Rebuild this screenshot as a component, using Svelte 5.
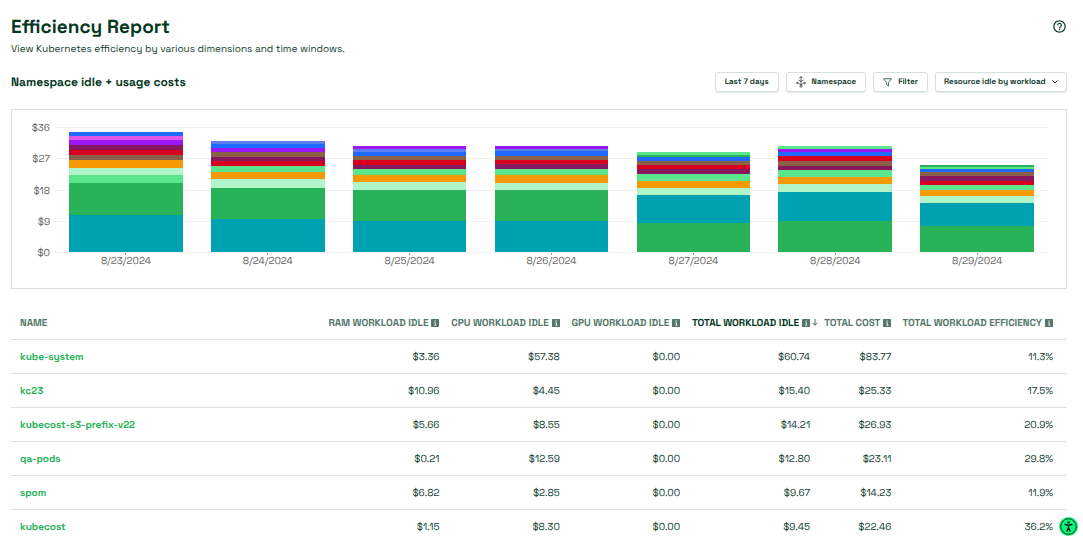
<script lang="ts">
  type Segment = [color: string, cost: number];
  type Day = { date: string; segments: Segment[] };
  type Row = { name: string; values: string[] };

  const MAX_COST = 36;
  const TICKS = [36, 27, 18, 9, 0];

  const TEAL = "#00a2b1";
  const GREEN = "#28b358";
  const MINT = "#5be58c";
  const PALE = "#b2f4c9";
  const ORANGE = "#f49900";
  const BROWN = "#8b6049";
  const RED = "#d9001f";
  const MAROON = "#87175f";
  const PURPLE = "#9a18f5";
  const PINK = "#e255e6";
  const BLUE = "#206bff";
  const PERIWINKLE = "#5d7ff0";

  // segments are listed from the bottom of the stack up
  const DAYS: Day[] = [
    {
      date: "8/23/2024",
      segments: [
        [TEAL, 10.7], [GREEN, 9.1], [MINT, 2.3], [PALE, 2.1], [ORANGE, 2.2], [BROWN, 1.6],
        [RED, 1.4], [MAROON, 1.4], [PURPLE, 1.4], [PINK, 1.3], [BLUE, 1.2],
      ],
    },
    {
      date: "8/24/2024",
      segments: [
        [TEAL, 9.6], [GREEN, 8.9], [PALE, 2.4], [ORANGE, 2.1], [MINT, 1.7], [RED, 1.4],
        [MAROON, 1.3], [BROWN, 1.5], [PURPLE, 1.1], [BLUE, 1.1], [PERIWINKLE, 1],
      ],
    },
    {
      date: "8/25/2024",
      segments: [
        [TEAL, 9], [GREEN, 8.9], [PALE, 2.2], [ORANGE, 2], [MINT, 1.7], [MAROON, 1.4],
        [RED, 1.3], [BROWN, 1.2], [BLUE, 1.1], [PERIWINKLE, 0.9], [PURPLE, 0.9],
      ],
    },
    {
      date: "8/26/2024",
      segments: [
        [TEAL, 9], [GREEN, 8.9], [PALE, 2.1], [ORANGE, 2.1], [MINT, 1.8], [MAROON, 1.4],
        [RED, 1.3], [BROWN, 1.2], [BLUE, 1.2], [PERIWINKLE, 0.8], [PURPLE, 0.8],
      ],
    },
    {
      date: "8/27/2024",
      segments: [
        [GREEN, 8.5], [TEAL, 7.8], [PALE, 2.2], [ORANGE, 2], [MINT, 1.9], [MAROON, 1.4],
        [RED, 1.2], [BROWN, 1.2], [BLUE, 1.1], [GREEN, 0.7], [MINT, 0.7],
      ],
    },
    {
      date: "8/28/2024",
      segments: [
        [GREEN, 8.9], [TEAL, 8.4], [PALE, 2.3], [ORANGE, 2], [MINT, 2], [MAROON, 1.3],
        [BROWN, 1.4], [RED, 1.4], [BLUE, 1.1], [PURPLE, 0.9], [MINT, 0.9],
      ],
    },
    {
      date: "8/29/2024",
      segments: [
        [GREEN, 7.6], [TEAL, 6.6], [PALE, 2], [ORANGE, 1.7], [MINT, 1.5], [RED, 1.1],
        [MAROON, 1.3], [BROWN, 1.3], [BLUE, 0.8], [MINT, 0.6], [GREEN, 0.6],
      ],
    },
  ];

  const COLUMNS = [
    "RAM Workload Idle",
    "CPU Workload Idle",
    "GPU Workload Idle",
    "Total Workload Idle",
    "Total Cost",
    "Total Workload Efficiency",
  ];

  const ROWS: Row[] = [
    { name: "kube-system", values: ["$3.36", "$57.38", "$0.00", "$60.74", "$83.77", "11.3%"] },
    { name: "kc23", values: ["$10.96", "$4.45", "$0.00", "$15.40", "$25.33", "17.5%"] },
    { name: "kubecost-s3-prefix-v22", values: ["$5.66", "$8.55", "$0.00", "$14.21", "$26.93", "20.9%"] },
    { name: "qa-pods", values: ["$0.21", "$12.59", "$0.00", "$12.80", "$23.11", "29.8%"] },
    { name: "spom", values: ["$6.82", "$2.85", "$0.00", "$9.67", "$14.23", "11.9%"] },
    { name: "kubecost", values: ["$1.15", "$8.30", "$0.00", "$9.45", "$22.46", "36.2%"] },
  ];

  let sortColumn = $state("Total Workload Idle");
  let idleMode = $state("workload");
</script>

<main class="page">
  <header class="page-header">
    <div>
      <h1>Efficiency Report</h1>
      <p class="subtitle">View Kubernetes efficiency by various dimensions and time windows.</p>
    </div>
    <button class="help" aria-label="Help">
      <svg viewBox="0 0 24 24" width="15" height="15" fill="#12402f">
        <path d="M11 18h2v-2h-2v2zm1-16C6.48 2 2 6.48 2 12s4.48 10 10 10 10-4.48 10-10S17.52 2 12 2zm0 18c-4.41 0-8-3.59-8-8s3.59-8 8-8 8 3.59 8 8-3.59 8-8 8zm0-14c-2.21 0-4 1.79-4 4h2c0-1.1.9-2 2-2s2 .9 2 2c0 2-3 1.75-3 5h2c0-2.25 3-2.5 3-5 0-2.21-1.79-4-4-4z" />
      </svg>
    </button>
  </header>

  <div class="toolbar">
    <h2>Namespace idle + usage costs</h2>
    <div class="controls">
      <button class="control">Last 7 days</button>
      <button class="control">
        <svg viewBox="0 0 20 24" width="10" height="12" fill="none" stroke="#333" stroke-width="1.5">
          <path d="M10 1v17M6.500 4.500 10 1l3.500 3.500M10 18 3.500 13M10 18l6.500-5M10 11 5 8M10 11l5-3" />
          <circle cx="10" cy="20.500" r="2" />
          <circle cx="2.500" cy="14" r="1.500" />
          <circle cx="17.500" cy="14" r="1.500" />
        </svg>
        Namespace
      </button>
      <button class="control">
        <svg viewBox="0 0 18 18" width="9" height="9" fill="none" stroke="#12402f" stroke-width="1.5" stroke-linejoin="round">
          <path d="M1 1.500h16l-6 7.500v7l-4-2.500V9z" />
        </svg>
        Filter
      </button>
      <div class="control select-wrap">
        <select aria-label="Idle breakdown" bind:value={idleMode}>
          <option value="workload">Resource idle by workload</option>
        </select>
        <svg viewBox="0 0 12 8" width="6" height="4" fill="none" stroke="#12402f" stroke-width="2">
          <path d="M1 1l5 5 5-5" />
        </svg>
      </div>
    </div>
  </div>

  <section class="card" aria-label="Namespace costs by day">
    <div class="axis">
      {#each TICKS as tick}
        <span>${tick}</span>
      {/each}
    </div>
    <div class="plot">
      <div class="grid">
        {#each TICKS as tick (tick)}
          <div class="grid-line"></div>
        {/each}
      </div>
      <div class="days">
        {#each DAYS as day}
          <div class="day">
            <div class="bar">
              {#each day.segments as [color, cost]}
                <div style="height: {(cost / MAX_COST) * 100}%; background: {color}"></div>
              {/each}
            </div>
          </div>
        {/each}
      </div>
      <div class="dates">
        {#each DAYS as day}
          <span>{day.date}</span>
        {/each}
      </div>
    </div>
  </section>

  <table>
    <colgroup>
      <col class="col-name" />
      <col class="col-ram" />
      <col class="col-cpu" />
      <col class="col-gpu" />
      <col class="col-idle" />
      <col class="col-cost" />
      <col class="col-efficiency" />
    </colgroup>
    <thead>
      <tr>
        <th scope="col">Name</th>
        {#each COLUMNS as column}
          <th scope="col" class:sorted={sortColumn === column}>
            <button class="sort" onclick={() => (sortColumn = column)}>
              {column}
              <svg viewBox="0 0 16 16" width="8" height="8">
                <rect width="16" height="16" rx="1" fill="#56766a" />
                <path d="M7 3h2.500v2H7zM6 7h3.500v5H11v1H6v-1h1.500V8H6z" fill="#fff" />
              </svg>
              {#if sortColumn === column}
                <svg class="arrow" viewBox="0 0 12 14" width="6" height="7" fill="none" stroke="#12402f" stroke-width="1.5">
                  <path d="M6 0v12M1 7.500l5 5 5-5" />
                </svg>
              {/if}
            </button>
          </th>
        {/each}
      </tr>
    </thead>
    <tbody>
      {#each ROWS as row}
        <tr>
          <td><a href="#{row.name}">{row.name}</a></td>
          {#each row.values as value}
            <td>{value}</td>
          {/each}
        </tr>
      {/each}
    </tbody>
  </table>
</main>

<button class="accessibility" aria-label="Accessibility options">
  <svg viewBox="0 0 38 38" width="19" height="19">
    <circle cx="19" cy="19" r="19" fill="#0cf57c" />
    <circle cx="19" cy="19" r="15.500" fill="none" stroke="#06371f" stroke-width="2" />
    <circle cx="19" cy="11" r="2.500" fill="#06271a" />
    <path d="M12 15l7 1.500 7-1.500M19 17v4M19 21l-3 7M19 21l3 7" fill="none" stroke="#06271a" stroke-width="3" stroke-linejoin="round" stroke-linecap="round" />
  </svg>
</button>

<style>
  :global(body) {
    margin: 0;
    background: #fff;
  }

  .page {
    padding: 16px 16px 0 11px;
    color: #12402f;
    font-family: "Space Grotesk", Inter, sans-serif;
    font-size: 10px;
    text-rendering: geometricPrecision;
  }

  button,
  select {
    padding: 0;
    border: 0;
    background: none;
    color: inherit;
    font: inherit;
    text-rendering: inherit;
    cursor: pointer;
  }

  svg {
    display: block;
    flex: none;
  }

  .page-header,
  .toolbar {
    display: flex;
    align-items: center;
    justify-content: space-between;
  }

  .page-header {
    align-items: flex-start;
  }

  h1,
  h2,
  p {
    margin: 0;
  }

  h1 {
    color: #06371f;
    font-size: 19px;
    line-height: 22px;
    font-weight: 700;
  }

  .subtitle {
    margin-top: 4px;
    line-height: 14px;
  }

  .help {
    margin-top: 3px;
  }

  .toolbar {
    margin-top: 16px;
  }

  h2 {
    color: #06371f;
    font-size: 12px;
    line-height: 16px;
    font-weight: 700;
  }

  .controls {
    display: flex;
    gap: 7px;
  }

  .control {
    display: flex;
    align-items: center;
    gap: 6px;
    box-sizing: border-box;
    height: 20px;
    padding: 0 9px;
    border: 1px solid #d5dfdc;
    border-radius: 3px;
    box-shadow: 0 1px 1px #e3eae8;
    font-size: 8px;
    font-weight: 700;
    white-space: nowrap;
  }

  .select-wrap {
    padding: 0 8px;
  }

  .select-wrap select {
    appearance: none;
    outline: none;
  }

  .card {
    display: flex;
    gap: 5px;
    margin-top: 17px;
    padding: 17px 18px 19px 9px;
    border: 1px solid #d5dfdc;
    color: #666;
  }

  .axis {
    display: flex;
    flex-direction: column;
    justify-content: space-between;
    width: 29px;
    height: 137px;
    margin-top: -5px;
    line-height: 12px;
    text-align: right;
  }

  .plot {
    position: relative;
    flex: 1;
  }

  .grid {
    position: absolute;
    inset: 0 0 auto;
    display: flex;
    flex-direction: column;
    justify-content: space-between;
    height: 126px;
  }

  .grid-line {
    height: 1px;
    background: #f1f1f1;
  }

  .days {
    position: relative;
    display: flex;
    height: 125px;
  }

  .day {
    display: flex;
    flex: 1;
    justify-content: center;
  }

  .bar {
    display: flex;
    flex-direction: column-reverse;
    width: 80%;
  }

  .dates {
    display: flex;
    line-height: 17px;
    text-align: center;
  }

  .dates span {
    flex: 1;
    background: linear-gradient(#999, #999) top center / 1px 3px no-repeat;
  }

  table {
    width: 100%;
    margin-top: 17px;
    border-collapse: collapse;
    table-layout: fixed;
  }

  .col-name {
    width: 28%;
  }

  .col-ram {
    width: 13.9%;
  }

  .col-cpu,
  .col-gpu {
    width: 11.4%;
  }

  .col-idle {
    width: 12.3%;
  }

  .col-cost {
    width: 7.7%;
  }

  th,
  td {
    height: 33px;
    padding: 0 14px 0 0;
    border-bottom: 1px solid #d9e2df;
    text-align: right;
    white-space: nowrap;
  }

  tbody tr:last-child td {
    border-bottom: 0;
  }

  th:first-child,
  td:first-child {
    padding-left: 9px;
    text-align: left;
  }

  th {
    color: #56766a;
    font-size: 10px;
    font-weight: 600;
    text-transform: uppercase;
  }

  .sorted {
    color: #06371f;
  }

  .sort {
    position: relative;
    display: flex;
    align-items: center;
    justify-content: flex-end;
    gap: 3px;
    width: 100%;
    text-transform: inherit;
  }

  .arrow {
    position: absolute;
    left: 100%;
    margin-left: 2px;
  }

  a {
    color: #28b358;
    font-weight: 700;
    text-decoration: none;
  }

  .accessibility {
    position: fixed;
    right: 5px;
    bottom: 7px;
  }
</style>
